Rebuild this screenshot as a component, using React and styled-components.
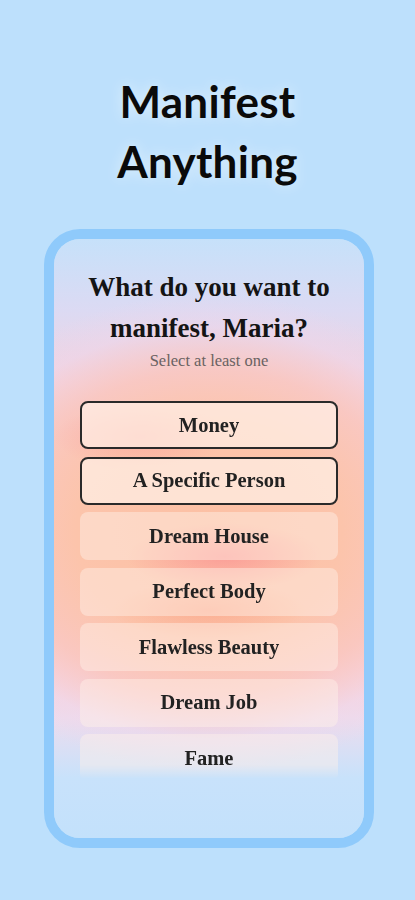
import React, { useState } from 'react';
import styled, { createGlobalStyle } from 'styled-components';

const GlobalStyle = createGlobalStyle`
	html, body {
		margin: 0;
		padding: 0;
		background: #bde0fc;
	}
	* {
		box-sizing: border-box;
	}
`;

const options = [ 'Money', 'A Specific Person', 'Dream House', 'Perfect Body', 'Flawless Beauty', 'Dream Job', 'Fame' ];

export default function App () {
	const [ selected, setSelected ] = useState([ 'Money', 'A Specific Person' ]);

	const toggle = (item) => {
		setSelected((prev) => (prev.includes(item) ? prev.filter((p) => p !== item) : [ ...prev, item ]));
	};

	return (
		<Page>
			<GlobalStyle />
			<Title>
				Manifest
				<br />
				Anything
			</Title>
			<Phone>
				<Screen>
					<Question>What do you want to manifest, Maria?</Question>
					<Hint>Select at least one</Hint>
					<OptionList>
						{options.map((item) => (
							<Option key={item} $active={selected.includes(item)} onClick={() => toggle(item)}>
								{item}
							</Option>
						))}
					</OptionList>
				</Screen>
			</Phone>
		</Page>
	);
}

const Page = styled.div`
	width: 415px;
	min-height: 900px;
	background: #bde0fc;
	display: flex;
	flex-direction: column;
	align-items: center;
	padding-top: 71px;
`;

const Title = styled.h1`
	margin: 0;
	font-family: 'Lato', 'DejaVu Sans', sans-serif;
	font-weight: 700;
	font-size: 44px;
	line-height: 60px;
	letter-spacing: 0.3px;
	color: #0a0a0a;
	text-align: center;
	text-shadow: 0 0 14px rgba(255, 255, 255, 0.55);
`;

const Phone = styled.div`
	margin-top: 38px;
	margin-left: 3px;
	width: 330px;
	height: 619px;
	border: 10px solid #8fcafb;
	border-radius: 36px;
	overflow: hidden;
`;

const Screen = styled.div`
	height: 100%;
	padding: 28px 25px 0;
	display: flex;
	flex-direction: column;
	align-items: center;
	background:
		radial-gradient(ellipse 40% 8% at 28% 33%, rgba(250, 150, 150, 0.5), transparent 70%),
		radial-gradient(ellipse 45% 8% at 55% 53%, rgba(250, 130, 140, 0.55), transparent 70%),
		radial-gradient(ellipse 45% 7% at 50% 62%, rgba(250, 150, 120, 0.45), transparent 70%),
		radial-gradient(ellipse 95% 40% at 50% 49%, #fcc0a4 0%, #fcc4ab 45%, rgba(250, 198, 190, 0.85) 68%, rgba(244, 212, 230, 0.4) 86%, transparent 100%),
		linear-gradient(to bottom, #c6e1fa 0%, #dcdaf3 12%, #f1d3e0 24%, #fbcbbc 40%, #fbc9b8 63%, #f7d2da 72%, #ecdcee 80%, #c8e2fb 90%, #c3e1fb 100%);
`;

const Question = styled.h2`
	margin: 0;
	width: 260px;
	font-family: 'Liberation Serif', 'DejaVu Serif', serif;
	font-weight: 700;
	font-size: 27px;
	line-height: 41px;
	color: #141414;
	text-align: center;
`;

const Hint = styled.p`
	margin: 2px 0 0;
	font-family: 'Liberation Serif', 'DejaVu Serif', serif;
	font-size: 16.5px;
	line-height: 20px;
	color: #6a6262;
	text-align: center;
`;

const OptionList = styled.div`
	margin-top: 30px;
	width: 258px;
	height: 380px;
	display: flex;
	flex-direction: column;
	gap: 7.5px;
	overflow: hidden;
	-webkit-mask-image: linear-gradient(to bottom, #000 0, #000 364px, transparent 378px);
	mask-image: linear-gradient(to bottom, #000 0, #000 364px, transparent 378px);
`;

const Option = styled.button`
	flex: 0 0 48px;
	width: 100%;
	border-radius: 8px;
	border: 2px solid ${(p) => (p.$active ? '#2a2a2a' : 'transparent')};
	background: ${(p) => (p.$active ? 'rgba(255, 240, 230, 0.72)' : 'rgba(255, 242, 232, 0.45)')};
	font-family: 'Liberation Serif', 'DejaVu Serif', serif;
	font-weight: 700;
	font-size: 20.5px;
	color: #222;
	cursor: pointer;
	padding: 0;
`;
